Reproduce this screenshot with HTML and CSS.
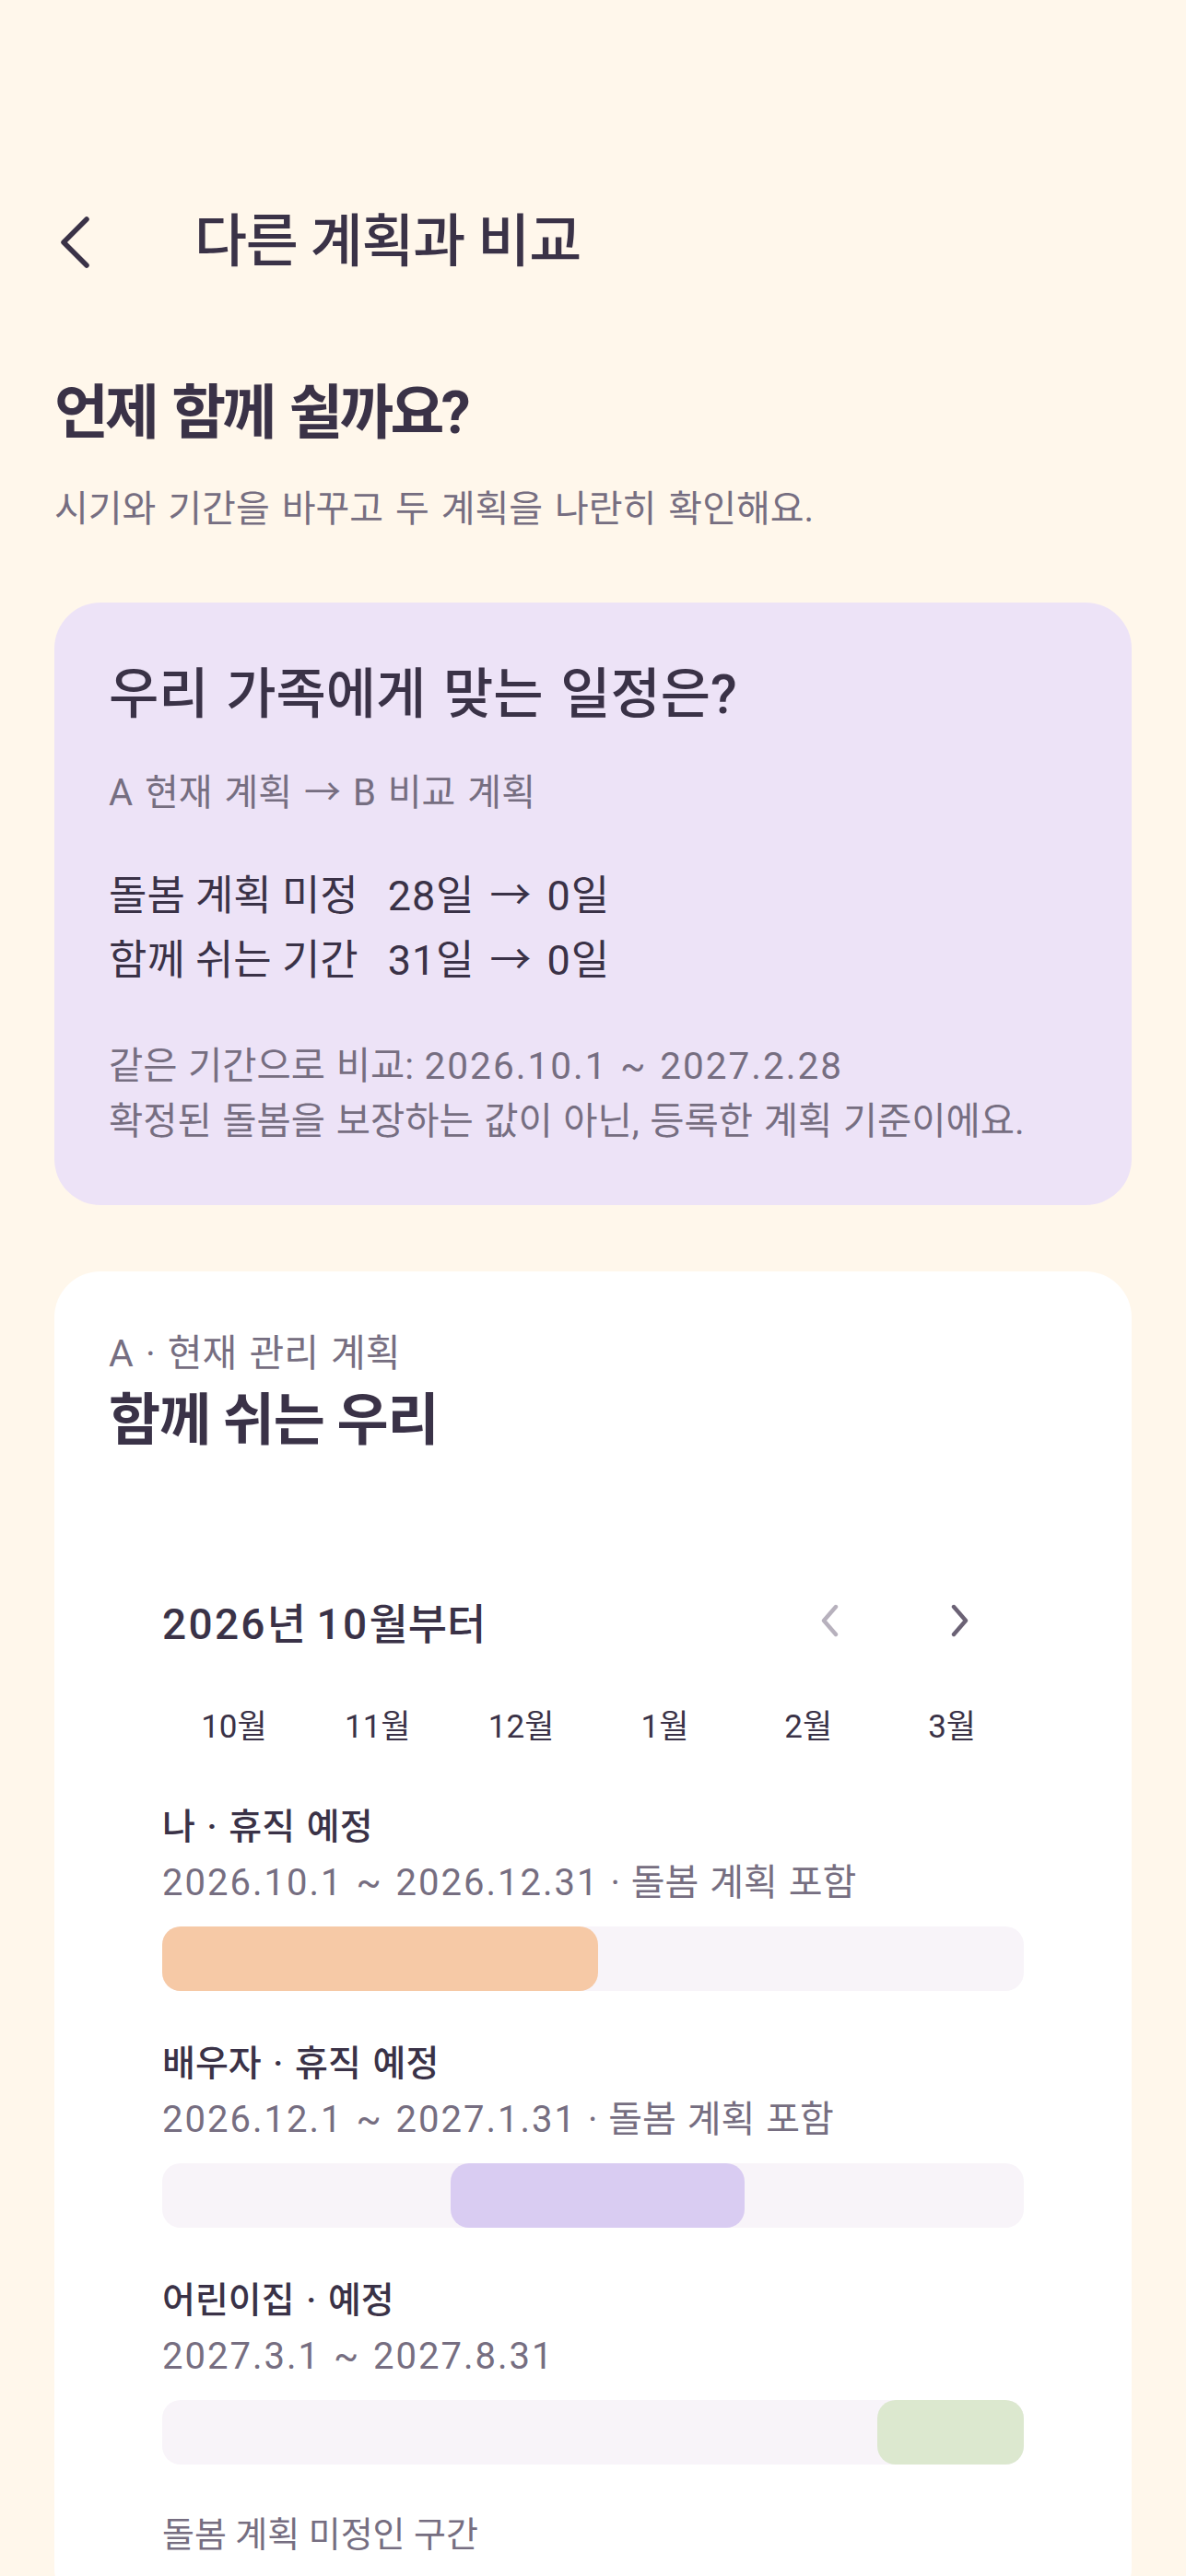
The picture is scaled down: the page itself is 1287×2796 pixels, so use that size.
FILE: index.html
```html
<!DOCTYPE html>
<html lang="ko">
<head>
<meta charset="utf-8">
<title>다른 계획과 비교</title>
<link rel="stylesheet" href="styles.css">
</head>
<body>
<div class="page">
  <header class="topbar">
    <button class="back" aria-label="뒤로">
      <svg width="36" height="60" viewBox="0 0 36 60"><path d="M32 5 L7 30 L32 55" fill="none" stroke="#3a3247" stroke-width="5.5" stroke-linecap="round" stroke-linejoin="round"/></svg>
    </button>
    <h1 class="title">다른 계획과 비교</h1>
  </header>

  <h2 class="heading">언제 함께 쉴까요?</h2>
  <p class="subtitle">시기와 기간을 바꾸고 두 계획을 나란히 확인해요.</p>

  <section class="summary">
    <h3 class="summary-title">우리 가족에게 맞는 일정은?</h3>
    <p class="summary-sub">A 현재 계획 → B 비교 계획</p>
    <div class="stats">
      <p class="stat"><span class="stat-label">돌봄 계획 미정</span><span class="stat-value">28일 → 0일</span></p>
      <p class="stat"><span class="stat-label">함께 쉬는 기간</span><span class="stat-value">31일 → 0일</span></p>
    </div>
    <div class="notes">
      <p>같은 기간으로 비교: <span class="num">2026.10.1 ~ 2027.2.28</span></p>
      <p>확정된 돌봄을 보장하는 값이 아닌, 등록한 계획 기준이에요.</p>
    </div>
  </section>

  <section class="plan">
    <p class="plan-label">A · 현재 관리 계획</p>
    <h3 class="plan-name">함께 쉬는 우리</h3>

    <div class="timeline">
      <div class="tl-head">
        <span class="tl-title"><span class="num">2026</span>년 <span class="num">10</span>월부터</span>
        <div class="tl-nav">
          <button class="nav-btn" aria-label="이전">
            <svg width="24" height="36" viewBox="0 0 24 36"><path d="M19 3 L6 18 L19 33" fill="none" stroke="#b7b1bd" stroke-width="4.4" stroke-linecap="round" stroke-linejoin="round"/></svg>
          </button>
          <button class="nav-btn" aria-label="다음">
            <svg width="24" height="36" viewBox="0 0 24 36"><path d="M5 3 L18 18 L5 33" fill="none" stroke="#6b6275" stroke-width="4.4" stroke-linecap="round" stroke-linejoin="round"/></svg>
          </button>
        </div>
      </div>
      <div class="months">
        <span>10월</span><span>11월</span><span>12월</span><span>1월</span><span>2월</span><span>3월</span>
      </div>

      <div class="row">
        <p class="row-label">나 · 휴직 예정</p>
        <p class="row-date"><span class="num">2026.10.1 ~ 2026.12.31</span> · 돌봄 계획 포함</p>
        <div class="track"><div class="fill fill-me" style="margin-left:0%;width:50.55%"></div></div>
      </div>
      <div class="row">
        <p class="row-label">배우자 · 휴직 예정</p>
        <p class="row-date"><span class="num">2026.12.1 ~ 2027.1.31</span> · 돌봄 계획 포함</p>
        <div class="track"><div class="fill fill-partner" style="margin-left:33.52%;width:34.07%"></div></div>
      </div>
      <div class="row">
        <p class="row-label">어린이집 · 예정</p>
        <p class="row-date"><span class="num">2027.3.1 ~ 2027.8.31</span></p>
        <div class="track"><div class="fill fill-care" style="margin-left:82.97%;width:17.03%"></div></div>
      </div>

      <p class="legend">돌봄 계획 미정인 구간</p>
    </div>
  </section>
</div>
</body>
</html>
```

FILE: styles.css
```css
* { box-sizing: border-box; }
html, body { margin: 0; padding: 0; }
body {
  background: #fff7eb;
  color: #3a3247;
  font-family: Roboto, "Noto Sans CJK KR", sans-serif;
}
p, h1, h2, h3 { margin: 0; font-weight: 400; }
button { background: none; border: 0; padding: 0; cursor: pointer; }
.num { letter-spacing: 0.05em; }

.page { padding: 0 59px 80px; }

.topbar {
  display: flex;
  align-items: center;
  height: 128px;
  margin-top: 199px;
}
.back {
  width: 152px;
  height: 100%;
  display: flex;
  align-items: center;
  padding-left: 3px;
}
.back svg { display: block; }
.title {
  font-size: 62px;
  font-weight: 500;
  line-height: 1;
  letter-spacing: -0.02em;
}

.heading {
  margin-top: 77px;
  font-size: 64px;
  line-height: 90px;
  font-weight: 700;
  letter-spacing: -0.06em;
  word-spacing: 0.08em;
}
.subtitle {
  margin-top: 34px;
  font-size: 40px;
  line-height: 50px;
  word-spacing: 3px;
  color: #766e81;
}

.summary {
  margin-top: 76px;
  background: #ede3f7;
  border-radius: 50px;
  padding: 62px 59px 61px;
}
.summary-title {
  font-size: 59px;
  line-height: 76px;
  font-weight: 500;
  word-spacing: 4px;
}
.summary-sub {
  margin-top: 42px;
  font-size: 40px;
  line-height: 54px;
  word-spacing: 3px;
  color: #766e81;
}
.stats { margin-top: 50px; }
.stat {
  font-size: 45px;
  line-height: 70px;
  display: flex;
  gap: 32px;
}
.stat-value { word-spacing: 4px; letter-spacing: 0.02em; }
.notes { margin-top: 49px; color: #766e81; }
.notes p { font-size: 40.5px; line-height: 60px; word-spacing: 1.5px; }

.plan {
  margin-top: 72px;
  background: #ffffff;
  border-radius: 50px;
  padding: 63px 59px 60px;
}
.plan-label {
  font-size: 41px;
  line-height: 52px;
  word-spacing: 3px;
  color: #766e81;
}
.plan-name {
  margin-top: 9px;
  font-size: 61px;
  line-height: 76px;
  font-weight: 700;
  letter-spacing: -0.02em;
}

.timeline {
  margin-top: 149px;
  padding: 0 58px;
}
.tl-head {
  display: flex;
  align-items: center;
  justify-content: space-between;
  height: 60px;
}
.tl-title {
  font-size: 46px;
  font-weight: 500;
}
.tl-nav { display: flex; gap: 4px; }
.nav-btn {
  width: 138px;
  height: 60px;
  display: flex;
  align-items: center;
  justify-content: center;
}
.nav-btn svg { display: block; }

.months {
  margin-top: 64px;
  display: grid;
  grid-template-columns: repeat(6, 1fr);
  text-align: center;
  font-size: 35px;
  line-height: 44px;
}

.row { margin-top: 53px; }
.months + .row { margin-top: 60px; }
.row-label {
  font-size: 39px;
  line-height: 52px;
  font-weight: 500;
  word-spacing: 3px;
}
.row-date {
  margin-top: 9px;
  font-size: 40px;
  line-height: 52px;
  word-spacing: 2px;
  color: #766e81;
}
.track {
  margin-top: 21px;
  height: 70px;
  border-radius: 20px;
  background: #f8f4f9;
  display: flex;
}
.fill { height: 100%; border-radius: 20px; }
.fill-me { background: #f6c9a6; }
.fill-partner { background: #d9ccf2; }
.fill-care { background: #dce8cf; }

.legend {
  margin-top: 50px;
  font-size: 38px;
  line-height: 52px;
  color: #766e81;
}
```
